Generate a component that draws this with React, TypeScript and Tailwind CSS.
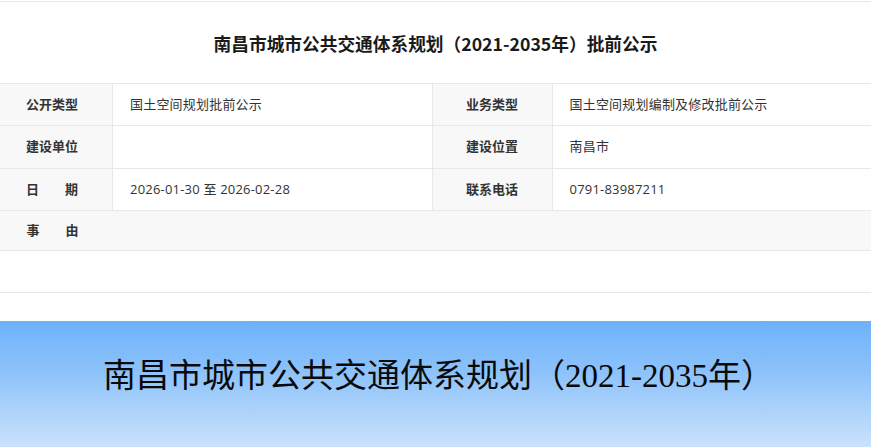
import React from "react";

const sans = { fontFamily: '"Open Sans", "Noto Sans CJK SC", sans-serif' };

function Label({ children, w }: { children: React.ReactNode; w: string }) {
  return (
    <div
      className={`${w} shrink-0 bg-[#f8f8f8] flex items-center justify-center text-[13px] font-bold text-[#333] border-r border-[#e8e8e8]`}
    >
      {children}
    </div>
  );
}

function Value({ children, border }: { children?: React.ReactNode; border?: boolean }) {
  return (
    <div
      className={`flex-1 flex items-center pl-[17px] text-[13px] tracking-[0.2px] text-[#333] ${border ? "border-r border-[#e8e8e8]" : ""}`}
    >
      {children}
    </div>
  );
}

function Row({ l1, v1, l2, v2, h }: { l1: string; v1?: string; l2: string; v2?: string; h: string }) {
  return (
    <div className={`flex ${h} border-b border-[#e8e8e8]`}>
      <Label w="w-[113px] pr-[8px]">{l1}</Label>
      <Value border>{v1}</Value>
      <Label w="w-[120px]">{l2}</Label>
      <Value>{v2}</Value>
    </div>
  );
}

export default function App() {
  return (
    <div className="w-[871px] h-[447px] overflow-hidden bg-white" style={sans}>
      <div className="mt-px border-t border-[#e8e8e8] h-[82px] flex items-center justify-center pt-[2px]">
        <h1
          className="text-[17.7px] font-bold text-[#1a1a1a]"
          style={{ fontFamily: '"Noto Sans CJK SC", sans-serif' }}
        >
          南昌市城市公共交通体系规划（2021-2035年）批前公示
        </h1>
      </div>
      <div className="border-t border-[#e8e8e8]">
        <Row h="h-[42px]" l1="公开类型" v1="国土空间规划批前公示" l2="业务类型" v2="国土空间规划编制及修改批前公示" />
        <Row h="h-[43px]" l1="建设单位" l2="建设位置" v2="南昌市" />
        <Row h="h-[42px]" l1="日　　期" v1="2026-01-30 至 2026-02-28" l2="联系电话" v2="0791-83987211" />
        <div className="h-[40px] bg-[#f8f8f8] border-b border-[#e8e8e8] flex items-center">
          <div className="w-[113px] pr-[8px] text-center text-[13px] font-bold text-[#333]">事　　由</div>
        </div>
        <div className="h-[42px] border-b border-[#e8e8e8]" />
      </div>
      <div className="h-[28px]" />
      <div className="h-[126px] bg-[linear-gradient(to_bottom,#6db2fa_0%,#8cc2fa_40%,#cbe2fc_100%)] pl-[103px] pt-[36px]">
        <div
          className="text-[33px] leading-[38px] text-[#0a0a0a]"
          style={{ fontFamily: '"Liberation Serif", "Noto Sans CJK SC", serif' }}
        >
          南昌市城市公共交通体系规划（2021-2035年）
        </div>
      </div>
    </div>
  );
}
